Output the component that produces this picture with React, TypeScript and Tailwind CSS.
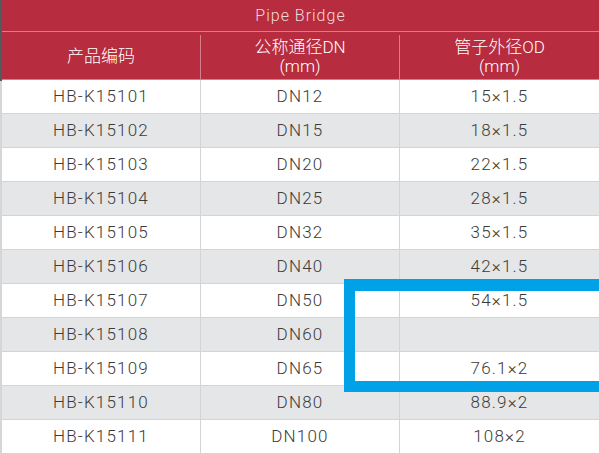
import React from 'react';

const rows = [
  { code: 'HB-K15101', dn: 'DN12', od: '15×1.5' },
  { code: 'HB-K15102', dn: 'DN15', od: '18×1.5' },
  { code: 'HB-K15103', dn: 'DN20', od: '22×1.5' },
  { code: 'HB-K15104', dn: 'DN25', od: '28×1.5' },
  { code: 'HB-K15105', dn: 'DN32', od: '35×1.5' },
  { code: 'HB-K15106', dn: 'DN40', od: '42×1.5' },
  { code: 'HB-K15107', dn: 'DN50', od: '54×1.5' },
  { code: 'HB-K15108', dn: 'DN60', od: '' },
  { code: 'HB-K15109', dn: 'DN65', od: '76.1×2' },
  { code: 'HB-K15110', dn: 'DN80', od: '88.9×2' },
  { code: 'HB-K15111', dn: 'DN100', od: '108×2' },
];

const font = { fontFamily: 'Roboto, "Noto Sans CJK SC", sans-serif' };

const App: React.FC = () => {
  return (
    <div className="relative w-[599px] h-[454px] overflow-hidden bg-white font-light" style={font}>
      <div className="flex h-full">
        {/* left edge */}
        <div className="w-[2px] flex flex-col shrink-0">
          <div className="h-[81px] bg-[#4f5b60]" />
          <div className="flex-1 bg-[#d6d6d6]" />
        </div>

        <div className="flex-1 flex flex-col">
          {/* title */}
          <div className="h-[32px] pt-[1px] bg-[#b72c3e] flex items-center justify-center text-[16px] tracking-[1px] text-[#f3d9dc] border-b border-[#d97d89]">
            Pipe Bridge
          </div>

          {/* column headers */}
          <div className="h-[49px] pt-[3px] bg-[#b72c3e] grid grid-cols-[199px_199px_1fr] text-white text-[17px] leading-[19px] border-b border-[#d97d89]">
            <div className="flex items-center justify-center border-r border-[#d97d89]">产品编码</div>
            <div className="flex flex-col items-center justify-center border-r border-[#d97d89]">
              <span>公称通径DN</span>
              <span>(mm)</span>
            </div>
            <div className="flex flex-col items-center justify-center">
              <span>管子外径OD</span>
              <span>(mm)</span>
            </div>
          </div>

          {/* body */}
          {rows.map((r, i) => (
            <div
              key={r.code}
              className={`h-[34px] shrink-0 grid grid-cols-[199px_199px_1fr] text-[17px] tracking-[1.2px] text-[#3b3b3b] border-b border-[#d4d4d4] ${
                i % 2 === 1 ? 'bg-[#e5e6e8]' : 'bg-white'
              }`}
            >
              <div className="flex items-center justify-center border-r border-[#d4d4d4]">{r.code}</div>
              <div className="flex items-center justify-center border-r border-[#d4d4d4]">{r.dn}</div>
              <div className="flex items-center justify-center">{r.od}</div>
            </div>
          ))}
        </div>
      </div>

      {/* highlight box */}
      <div className="absolute left-[344px] top-[279px] w-[280px] h-[113px] border-[11px] border-t-[12px] border-[#00a1e6]" />
    </div>
  );
};

export default App;
